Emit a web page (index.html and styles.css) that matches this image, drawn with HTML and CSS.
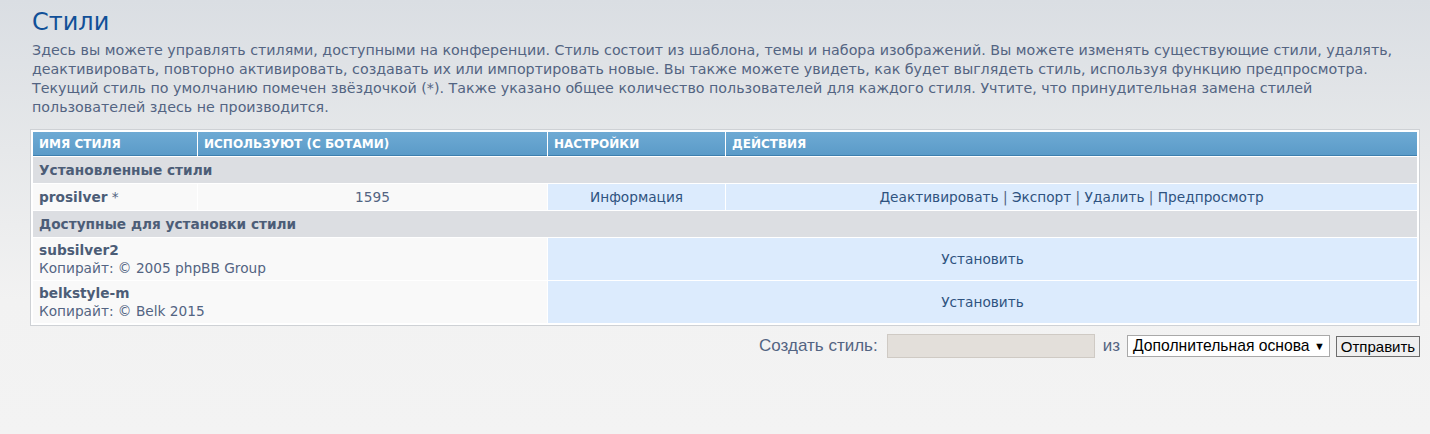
FILE: index.html
```html
<!DOCTYPE html>
<html lang="ru">
<head>
<meta charset="utf-8">
<title>Стили</title>
<link rel="stylesheet" href="styles.css">
</head>
<body>
<div class="page">
  <h1 class="title">Стили</h1>
  <p class="intro">Здесь вы можете управлять стилями, доступными на конференции. Стиль состоит из шаблона, темы и набора изображений. Вы можете изменять существующие стили, удалять, деактивировать, повторно активировать, создавать их или импортировать новые. Вы также можете увидеть, как будет выглядеть стиль, используя функцию предпросмотра. Текущий стиль по умолчанию помечен звёздочкой (*). Также указано общее количество пользователей для каждого стиля. Учтите, что принудительная замена стилей пользователей здесь не производится.</p>

  <table class="styles">
    <colgroup>
      <col class="c1"><col class="c2"><col class="c3"><col class="c4">
    </colgroup>
    <thead>
      <tr>
        <th>Имя стиля</th>
        <th>Используют (с ботами)</th>
        <th>Настройки</th>
        <th>Действия</th>
      </tr>
    </thead>
    <tbody>
      <tr class="group"><td colspan="4">Установленные стили</td></tr>
      <tr class="row">
        <td class="name"><b>prosilver</b> *</td>
        <td class="plain center">1595</td>
        <td class="act center"><a href="#">Информация</a></td>
        <td class="act center"><a href="#">Деактивировать</a> | <a href="#">Экспорт</a> | <a href="#">Удалить</a> | <a href="#">Предпросмотр</a></td>
      </tr>
      <tr class="group"><td colspan="4">Доступные для установки стили</td></tr>
      <tr class="row tall">
        <td class="name" colspan="2"><b>subsilver2</b><br><span class="copy">Копирайт: © 2005 phpBB Group</span></td>
        <td class="act center" colspan="2"><a href="#">Установить</a></td>
      </tr>
      <tr class="row tall">
        <td class="name" colspan="2"><b>belkstyle-m</b><br><span class="copy">Копирайт: © Belk 2015</span></td>
        <td class="act center" colspan="2"><a href="#">Установить</a></td>
      </tr>
    </tbody>
  </table>

  <form class="create">
    <label class="lbl" for="nm">Создать стиль:</label>
    <input class="field" id="nm" type="text">
    <span class="lbl from">из</span>
    <span class="select">Дополнительная основа <span class="arrow">▼</span></span>
    <button class="submit" type="button">Отправить</button>
  </form>
</div>
</body>
</html>
```
FILE: styles.css
```css
html, body {
  margin: 0;
  padding: 0;
}
body {
  width: 1430px;
  height: 434px;
  overflow: hidden;
  background: linear-gradient(to bottom, #dadee3 0px, #e6e8ea 150px, #f2f2f2 300px, #f3f3f3 434px);
  font-family: "DejaVu Sans", Verdana, sans-serif;
  color: #536482;
}
.page {
  padding: 4px 10px 0 30px;
}
.title {
  margin: 0 0 0 2px;
  font-family: "DejaVu Sans", Verdana, sans-serif;
  font-weight: normal;
  font-size: 24px;
  line-height: 36px;
  color: #115098;
}
.intro {
  margin: 1px 0 0 2px;
  font-size: 14.25px;
  line-height: 19px;
  color: #536482;
  width: 1386px;
}
.styles {
  margin-top: 12px;
  width: 1390px;
  border: 1px solid #ced1d5;
  padding: 1px;
  border-spacing: 1px;
  background: #ffffff;
  table-layout: fixed;
  font-size: 13.7px;
}
.c1 { width: 164px; }
.c2 { width: 349px; }
.c3 { width: 177px; }
.c4 { width: auto; }
.styles th {
  height: 23px;
  padding: 0 6px;
  text-align: left;
  text-transform: uppercase;
  font-size: 12px;
  font-weight: bold;
  color: #ffffff;
  background: linear-gradient(to bottom, #6eaad4 0%, #5b9bc8 100%);
  border-bottom: 1px solid #3e7fae;
  white-space: nowrap;
}
.group td {
  height: 26px;
  padding: 0 6px;
  background: #dcdee2;
  font-weight: bold;
  color: #4c5d77;
}
.row td {
  height: 26px;
  padding: 0 6px;
  color: #536482;
}
.row.tall td {
  height: 42px;
}
.row .name {
  background: #f9f9f9;
  color: #536482;
  line-height: 18px;
}
.row .name b {
  color: #4c5d77;
}
.row .plain {
  background: #f9f9f9;
}
.row .act {
  background: #dcebfd;
}
.center {
  text-align: center;
}
.styles a {
  color: #2f5380;
  text-decoration: none;
}
.copy {
  color: #536482;
}
.create {
  display: flex;
  justify-content: flex-end;
  align-items: center;
  margin-top: 8px;
  font-family: "Liberation Sans", Arial, sans-serif;
}
.lbl {
  font-size: 17px;
  color: #536482;
}
.field {
  box-sizing: border-box;
  width: 208px;
  height: 24px;
  margin: 0 0 0 9px;
  padding: 0;
  border: 1px solid #cfcac4;
  background: #e3dfda;
}
.from {
  margin-left: 8px;
}
.select {
  display: inline-flex;
  align-items: center;
  box-sizing: border-box;
  width: 203px;
  height: 22px;
  padding: 0 4px 0 5px;
  margin-left: 7px;
  border: 1px solid #a9a9a9;
  background: #ffffff;
  color: #000000;
  font-size: 15.7px;
  white-space: pre;
}
.arrow {
  font-size: 11px;
}
.submit {
  box-sizing: border-box;
  height: 21px;
  width: 84px;
  padding: 0;
  margin-left: 6px;
  border: 1px solid #6d6d6d;
  background: #efefef;
  color: #000000;
  font-family: "Liberation Sans", Arial, sans-serif;
  font-size: 15px;
}
```
